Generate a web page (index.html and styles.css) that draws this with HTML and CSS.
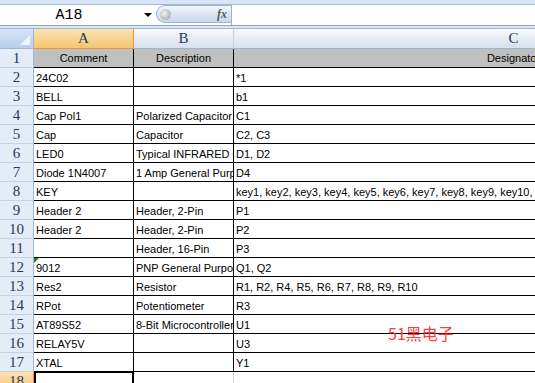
FILE: index.html
```html
<!DOCTYPE html>
<html>
<head>
<meta charset="utf-8">
<link rel="stylesheet" href="styles.css">
</head>
<body>
<div class="app">
  <div class="topstrip"></div>
  <div class="fbar">
    <div class="namebox"><span class="nametext">A18</span><span class="ddarrow"></span></div>
    <div class="fxbtn"><span class="knob"></span><span class="fx">fx</span></div>
    <div class="finput"></div>
  </div>
  <div class="band"></div>
  <div class="sheet">
    <div class="corner"><span class="tri"></span></div>
    <div class="ch sel">A</div>
    <div class="ch">B</div>
    <div class="ch">C</div>

    <div class="rh">1</div><div class="c hd">Comment</div><div class="c hd">Description</div><div class="c hd">Designator</div>
    <div class="rh">2</div><div class="c">24C02</div><div class="c"></div><div class="c">*1</div>
    <div class="rh">3</div><div class="c">BELL</div><div class="c"></div><div class="c">b1</div>
    <div class="rh">4</div><div class="c">Cap Pol1</div><div class="c">Polarized Capacitor (Radial)</div><div class="c">C1</div>
    <div class="rh">5</div><div class="c">Cap</div><div class="c">Capacitor</div><div class="c">C2, C3</div>
    <div class="rh">6</div><div class="c">LED0</div><div class="c">Typical INFRARED GaAs LED</div><div class="c">D1, D2</div>
    <div class="rh">7</div><div class="c">Diode 1N4007</div><div class="c">1 Amp General Purpose Rectifier</div><div class="c">D4</div>
    <div class="rh">8</div><div class="c">KEY</div><div class="c"></div><div class="c">key1, key2, key3, key4, key5, key6, key7, key8, key9, key10, key11, key12</div>
    <div class="rh">9</div><div class="c">Header 2</div><div class="c">Header, 2-Pin</div><div class="c">P1</div>
    <div class="rh">10</div><div class="c">Header 2</div><div class="c">Header, 2-Pin</div><div class="c">P2</div>
    <div class="rh">11</div><div class="c"></div><div class="c">Header, 16-Pin</div><div class="c">P3</div>
    <div class="rh">12</div><div class="c flag">9012</div><div class="c">PNP General Purpose Amplifier</div><div class="c">Q1, Q2</div>
    <div class="rh">13</div><div class="c">Res2</div><div class="c">Resistor</div><div class="c">R1, R2, R4, R5, R6, R7, R8, R9, R10</div>
    <div class="rh">14</div><div class="c">RPot</div><div class="c">Potentiometer</div><div class="c">R3</div>
    <div class="rh">15</div><div class="c">AT89S52</div><div class="c">8-Bit Microcontroller</div><div class="c">U1</div>
    <div class="rh">16</div><div class="c">RELAY5V</div><div class="c"></div><div class="c">U3</div>
    <div class="rh">17</div><div class="c">XTAL</div><div class="c"></div><div class="c">Y1</div>
    <div class="rh selr">18</div><div class="e active"></div><div class="e"></div><div class="e"></div>
  </div>
  <div class="watermark">51黑电子</div>
</div>
</body>
</html>
```

FILE: styles.css
```css
html, body {
  margin: 0;
  padding: 0;
  background: #ffffff;
  overflow: hidden;
}
.app {
  position: relative;
  width: 535px;
  height: 383px;
  overflow: hidden;
  font-family: "Liberation Sans", Arial, sans-serif;
}
.topstrip {
  height: 4px;
  background: #d9e5f4;
  border-bottom: 1px solid #a3bad8;
}
.fbar {
  display: flex;
  height: 20px;
  background: #ffffff;
  border-bottom: 1px solid #8ea8cb;
}
.namebox {
  width: 156px;
  display: flex;
  align-items: center;
  position: relative;
}
.nametext {
  flex: 1;
  text-align: center;
  font-family: "Liberation Mono", "DejaVu Sans Mono", monospace;
  font-size: 15px;
  color: #000;
  padding-right: 6px;
}
.ddarrow {
  width: 0;
  height: 0;
  border-left: 4px solid transparent;
  border-right: 4px solid transparent;
  border-top: 4px solid #000;
  margin-right: 4px;
}
.fxbtn {
  width: 75px;
  height: 18px;
  box-sizing: border-box;
  border: 1px solid #9bb2d2;
  border-right: none;
  border-radius: 9px 0 0 9px;
  background: linear-gradient(#f4f8fc, #dbe6f4 50%, #c9d9ee);
  display: flex;
  align-items: center;
  justify-content: space-between;
  padding: 0 4px 0 3px;
}
.knob {
  width: 11px;
  height: 11px;
  border-radius: 50%;
  background: radial-gradient(circle at 40% 40%, #f2f2f2, #bdbdbd 60%, #a0a0a0);
}
.fx {
  font-family: "Liberation Serif", serif;
  font-style: italic;
  font-weight: bold;
  font-size: 12px;
  color: #5a5a5a;
}
.finput {
  flex: 1;
  border-left: 1px solid #9bb2d2;
}
.band {
  height: 2px;
  background: #dbe6f4;
  border-bottom: 1px solid #9fb6d4;
}
.sheet {
  display: grid;
  grid-template-columns: 34px 100px 100px 560px;
  grid-auto-rows: 19px;
  grid-template-rows: 20px;
}
.sheet > div {
  box-sizing: border-box;
}
.corner {
  background: linear-gradient(#d6e3f5, #b9cfec);
  border-right: 1px solid #9eb6ce;
  border-bottom: 1px solid #9eb6ce;
  position: relative;
}
.tri {
  position: absolute;
  right: 3px;
  bottom: 3px;
  width: 0;
  height: 0;
  border-left: 10px solid transparent;
  border-bottom: 10px solid #f2f6fb;
}
.ch {
  background: linear-gradient(#f9fbfd, #e4eaf3 55%, #d8e1ee);
  border-right: 1px solid #c5d2e3;
  border-bottom: 1px solid #9eb6ce;
  text-align: center;
  font-family: "Liberation Serif", serif;
  font-size: 15px;
  line-height: 19px;
  color: #1f3960;
}
.ch.sel {
  background: linear-gradient(#fbe2b3, #f7d38e 55%, #f3c672);
  border-right: 1px solid #f29536;
  border-bottom: 1px solid #f29536;
}
.rh {
  background: #e4ecf7;
  border-right: 1px solid #9eb6ce;
  border-bottom: 1px solid #c5d2e3;
  text-align: center;
  font-family: "Liberation Serif", serif;
  font-size: 15px;
  line-height: 19px;
  color: #1f3960;
}
.rh.selr {
  background: linear-gradient(#fbe2b3, #f3c672);
  border-right: 1px solid #f29536;
}
.c {
  border-right: 1px solid #000;
  border-bottom: 1px solid #000;
  font-size: 11px;
  line-height: 18px;
  padding: 1px 0 0 2px;
  white-space: nowrap;
  overflow: hidden;
  color: #000;
  position: relative;
}
.c.hd {
  background: #c0c0c0;
  text-align: center;
  padding: 0;
  line-height: 18px;
}
.c.flag::before {
  content: "";
  position: absolute;
  left: 0;
  top: 0;
  border-top: 5px solid #1a8a1a;
  border-right: 5px solid transparent;
}
.e {
  border-right: 1px solid #d0d7e5;
  border-bottom: 1px solid #d0d7e5;
}
.e.active {
  border: 2px solid #000;
  border-top: 1px solid #000;
}
.watermark {
  position: absolute;
  left: 388px;
  top: 323px;
  font-family: "Noto Sans CJK SC", sans-serif;
  font-size: 16px;
  line-height: 20px;
  color: #ff3b3b;
}
```
